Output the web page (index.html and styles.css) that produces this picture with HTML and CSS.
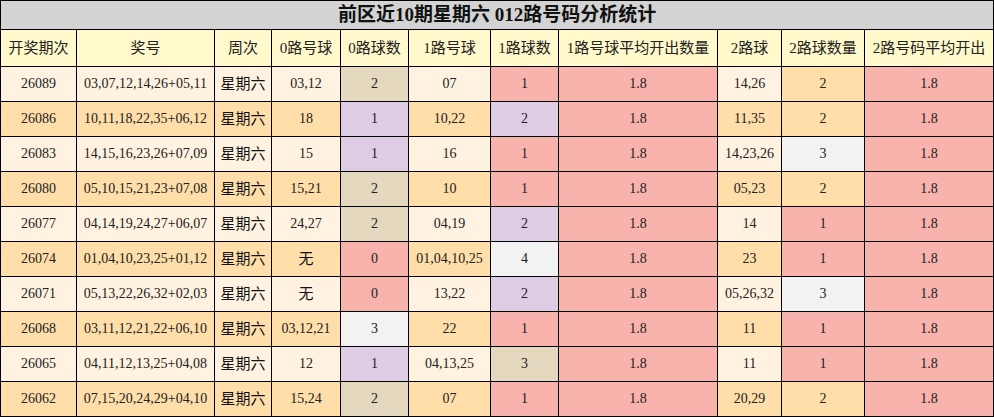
FILE: index.html
```html
<!DOCTYPE html>
<html lang="zh">
<head>
<meta charset="utf-8">
<link rel="stylesheet" href="styles.css">
</head>
<body>
<table class="stat">
  <colgroup>
    <col class="w76"><col class="w138"><col class="w57"><col class="w69"><col class="w68"><col class="w82"><col class="w68"><col class="w159"><col class="w64"><col class="w83"><col class="w129">
  </colgroup>
  <tr class="title"><td colspan="11">前区近10期星期六 012路号码分析统计</td></tr>
  <tr class="head">
    <td>开奖期次</td><td>奖号</td><td>周次</td><td>0路号球</td><td>0路球数</td><td>1路号球</td><td>1路球数</td><td>1路号球平均开出数量</td><td>2路球</td><td>2路球数量</td><td>2路号码平均开出</td>
  </tr>
  <tr class="r-a"><td>26089</td><td>03,07,12,14,26+05,11</td><td class="cn">星期六</td><td>03,12</td><td class="tan">2</td><td>07</td><td class="pink">1</td><td class="pink">1.8</td><td>14,26</td><td class="org">2</td><td class="pink">1.8</td></tr>
  <tr class="r-b"><td>26086</td><td>10,11,18,22,35+06,12</td><td class="cn">星期六</td><td>18</td><td class="pur">1</td><td>10,22</td><td class="pur">2</td><td class="pink">1.8</td><td>11,35</td><td class="org">2</td><td class="pink">1.8</td></tr>
  <tr class="r-a"><td>26083</td><td>14,15,16,23,26+07,09</td><td class="cn">星期六</td><td>15</td><td class="pur">1</td><td>16</td><td class="pink">1</td><td class="pink">1.8</td><td>14,23,26</td><td class="gray">3</td><td class="pink">1.8</td></tr>
  <tr class="r-b"><td>26080</td><td>05,10,15,21,23+07,08</td><td class="cn">星期六</td><td>15,21</td><td class="tan">2</td><td>10</td><td class="pink">1</td><td class="pink">1.8</td><td>05,23</td><td class="org">2</td><td class="pink">1.8</td></tr>
  <tr class="r-a"><td>26077</td><td>04,14,19,24,27+06,07</td><td class="cn">星期六</td><td>24,27</td><td class="tan">2</td><td>04,19</td><td class="pur">2</td><td class="pink">1.8</td><td>14</td><td class="pink">1</td><td class="pink">1.8</td></tr>
  <tr class="r-b"><td>26074</td><td>01,04,10,23,25+01,12</td><td class="cn">星期六</td><td class="cn">无</td><td class="pink">0</td><td>01,04,10,25</td><td class="gray">4</td><td class="pink">1.8</td><td>23</td><td class="pink">1</td><td class="pink">1.8</td></tr>
  <tr class="r-a"><td>26071</td><td>05,13,22,26,32+02,03</td><td class="cn">星期六</td><td class="cn">无</td><td class="pink">0</td><td>13,22</td><td class="pur">2</td><td class="pink">1.8</td><td>05,26,32</td><td class="gray">3</td><td class="pink">1.8</td></tr>
  <tr class="r-b"><td>26068</td><td>03,11,12,21,22+06,10</td><td class="cn">星期六</td><td>03,12,21</td><td class="gray">3</td><td>22</td><td class="pink">1</td><td class="pink">1.8</td><td>11</td><td class="pink">1</td><td class="pink">1.8</td></tr>
  <tr class="r-a"><td>26065</td><td>04,11,12,13,25+04,08</td><td class="cn">星期六</td><td>12</td><td class="pur">1</td><td>04,13,25</td><td class="tan">3</td><td class="pink">1.8</td><td>11</td><td class="pink">1</td><td class="pink">1.8</td></tr>
  <tr class="r-b"><td>26062</td><td>07,15,20,24,29+04,10</td><td class="cn">星期六</td><td>15,24</td><td class="tan">2</td><td>07</td><td class="pink">1</td><td class="pink">1.8</td><td>20,29</td><td class="org">2</td><td class="pink">1.8</td></tr>
</table>
</body>
</html>
```
FILE: styles.css
```css
html, body {
  margin: 0;
  padding: 0;
  background: #ffffff;
}
.stat {
  border-collapse: collapse;
  table-layout: fixed;
  width: 994px;
  font-family: "Liberation Serif", "Noto Sans CJK SC", serif;
  color: #222;
}
.stat td {
  border: 1px solid #000;
  padding: 0;
  text-align: center;
  vertical-align: middle;
  font-size: 14px;
  line-height: 16px;
  white-space: nowrap;
  overflow: hidden;
}
.w76 { width: 76px; }
.w138 { width: 138px; }
.w57 { width: 57px; }
.w69 { width: 69px; }
.w68 { width: 68px; }
.w82 { width: 82px; }
.w159 { width: 159px; }
.w64 { width: 64px; }
.w83 { width: 83px; }
.w129 { width: 129px; }
.title td {
  height: 28px;
  background: #d3d3d3;
  font-size: 19px;
  font-weight: bold;
  color: #111;
}
.head td {
  height: 36px;
  background: #fff9cc;
  font-size: 15px;
  color: #222;
}
.stat tr.r-a td, .stat tr.r-b td {
  height: 34px;
}
.r-a td { background: #fff2e0; }
.r-b td { background: #ffdeaa; }
.stat td.cn { font-size: 15px; color: #111; }
.stat td.tan { background: #e4d8be; }
.stat td.pur { background: #ddcce4; }
.stat td.pink { background: #f9b3ad; }
.stat td.gray { background: #f2f2f2; }
.stat td.org { background: #ffdeaa; }
```
